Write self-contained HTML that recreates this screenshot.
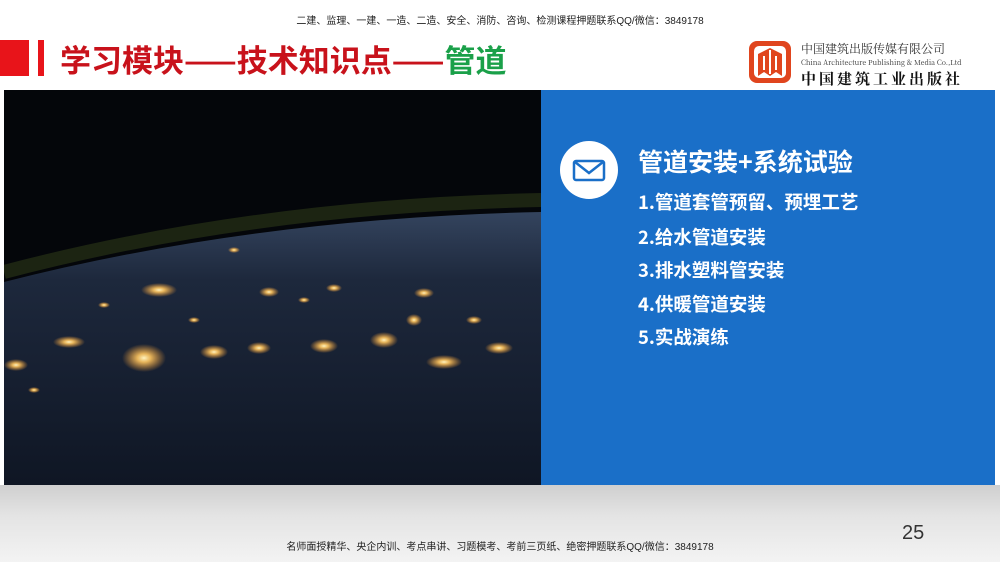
<!DOCTYPE html>
<html><head><meta charset="utf-8"><style>
*{margin:0;padding:0}
body{width:1000px;height:562px;position:relative;overflow:hidden;background:#fff;font-family:"Liberation Sans","Noto Sans CJK SC",sans-serif}
.top{position:absolute;top:12px;left:0;width:1000px;text-align:center;font-size:10px;color:#222}
.bar1{position:absolute;left:0;top:40px;width:29px;height:36px;background:#e8141a}
.bar2{position:absolute;left:38px;top:40px;width:6px;height:36px;background:#e8141a}
.title{position:absolute;left:60px;top:36px;font-size:31px;font-weight:bold;color:#c8121b;letter-spacing:0px;font-family:"Noto Sans CJK SC",sans-serif;white-space:nowrap}
.title span{color:#1aa049}
.logo{position:absolute;left:748px;top:40px;width:44px;height:44px}
.lt{position:absolute;left:801px;top:40px;font-family:"Noto Serif CJK SC",serif;color:#333;white-space:nowrap}
.img{position:absolute;left:4px;top:90px;width:537px;height:395px;overflow:hidden;background:#04060a}
.blue{position:absolute;left:541px;top:90px;width:454px;height:395px;background:#1a6fc8}
.circ{position:absolute;left:560px;top:141px;width:58px;height:58px;border-radius:50%;background:#fff}
.bt{position:absolute;left:638px;color:#fff;font-weight:bold;font-family:"Noto Sans CJK SC",sans-serif;white-space:nowrap}
.floor{position:absolute;left:0;top:485px;width:1000px;height:77px;background:linear-gradient(#cfcfcf,#e4e4e4 40%,#f3f3f3)}
.num{position:absolute;left:902px;top:522px;font-size:20px;color:#333}
.bot{position:absolute;top:538px;left:0;width:1000px;text-align:center;font-size:10px;color:#222}
</style></head><body>
<div class="top">二建、监理、一建、一造、二造、安全、消防、咨询、检测课程押题联系QQ/微信：3849178</div>
<div class="bar1"></div><div class="bar2"></div>
<div class="title">学习模块——技术知识点——<span>管道</span></div>
<svg class="logo" viewBox="0 0 44 44"><rect x="1" y="1" width="42" height="42" rx="8" fill="#e0451e"/><rect x="6" y="6" width="32" height="32" rx="5" fill="#fff"/><path d="M10 14 L22 8 L34 14 L34 36 L28 32 L22 36 L16 32 L10 36 Z" fill="#e0451e"/><path d="M22 10 V34 M16 16 V30 M28 16 V30" stroke="#fff" stroke-width="2"/></svg>
<div class="lt"><div style="font-size:12px">中国建筑出版传媒有限公司</div><div style="font-size:7px;margin-top:1px">China Architecture Publishing &amp; Media Co.,Ltd</div><div style="font-size:15px;font-weight:bold;margin-top:0px;letter-spacing:3px;color:#111">中国建筑工业出版社</div></div>
<div class="img">
<svg width="537" height="395" viewBox="0 0 537 395">
<defs>
<linearGradient id="e" x1="0" y1="0" x2="0" y2="1"><stop offset="0" stop-color="#34445e"/><stop offset="0.25" stop-color="#1d283c"/><stop offset="1" stop-color="#0f1624"/></linearGradient>
<radialGradient id="g"><stop offset="0" stop-color="#fff3c0"/><stop offset="0.3" stop-color="#ffc660" stop-opacity=".9"/><stop offset="1" stop-color="#ffa030" stop-opacity="0"/></radialGradient>
</defs>
<path d="M0 182 Q250 116 537 110" fill="none" stroke="#1c2412" stroke-width="14"/>
<path d="M0 192 Q250 128 537 122 L537 395 L0 395 Z" fill="url(#e)"/>
<g fill="url(#g)">
<ellipse cx="155" cy="200" rx="18" ry="7"/><ellipse cx="140" cy="268" rx="22" ry="14"/><ellipse cx="65" cy="252" rx="16" ry="6"/><ellipse cx="12" cy="275" rx="12" ry="6"/>
<ellipse cx="210" cy="262" rx="14" ry="7"/><ellipse cx="255" cy="258" rx="12" ry="6"/><ellipse cx="320" cy="256" rx="14" ry="7"/><ellipse cx="380" cy="250" rx="14" ry="8"/><ellipse cx="440" cy="272" rx="18" ry="7"/><ellipse cx="495" cy="258" rx="14" ry="6"/>
<ellipse cx="420" cy="203" rx="10" ry="5"/><ellipse cx="265" cy="202" rx="10" ry="5"/><ellipse cx="330" cy="198" rx="8" ry="4"/><ellipse cx="470" cy="230" rx="8" ry="4"/><ellipse cx="230" cy="160" rx="6" ry="3"/><ellipse cx="410" cy="230" rx="8" ry="6"/><ellipse cx="100" cy="215" rx="6" ry="3"/><ellipse cx="30" cy="300" rx="6" ry="3"/><ellipse cx="300" cy="210" rx="6" ry="3"/><ellipse cx="190" cy="230" rx="6" ry="3"/>
</g>
</svg>
</div>
<div class="blue"></div>
<div class="circ"><svg width="58" height="58" viewBox="0 0 58 58"><rect x="14" y="20" width="30" height="19" rx="2" fill="none" stroke="#1a6fc8" stroke-width="2.5"/><path d="M15 21 L29 32 L43 21" fill="none" stroke="#1a6fc8" stroke-width="2.5"/></svg></div>
<div class="bt" style="top:143px;font-size:25px">管道安装+系统试验</div>
<div class="bt" style="top:189px;font-size:18.5px">1.管道套管预留、预埋工艺</div>
<div class="bt" style="top:224px;font-size:18.5px">2.给水管道安装</div>
<div class="bt" style="top:257px;font-size:18.5px">3.排水塑料管安装</div>
<div class="bt" style="top:291px;font-size:18.5px">4.供暖管道安装</div>
<div class="bt" style="top:324px;font-size:18.5px">5.实战演练</div>
<div class="floor"></div>
<div class="num">25</div>
<div class="bot">名师面授精华、央企内训、考点串讲、习题模考、考前三页纸、绝密押题联系QQ/微信：3849178</div>
</body></html>
